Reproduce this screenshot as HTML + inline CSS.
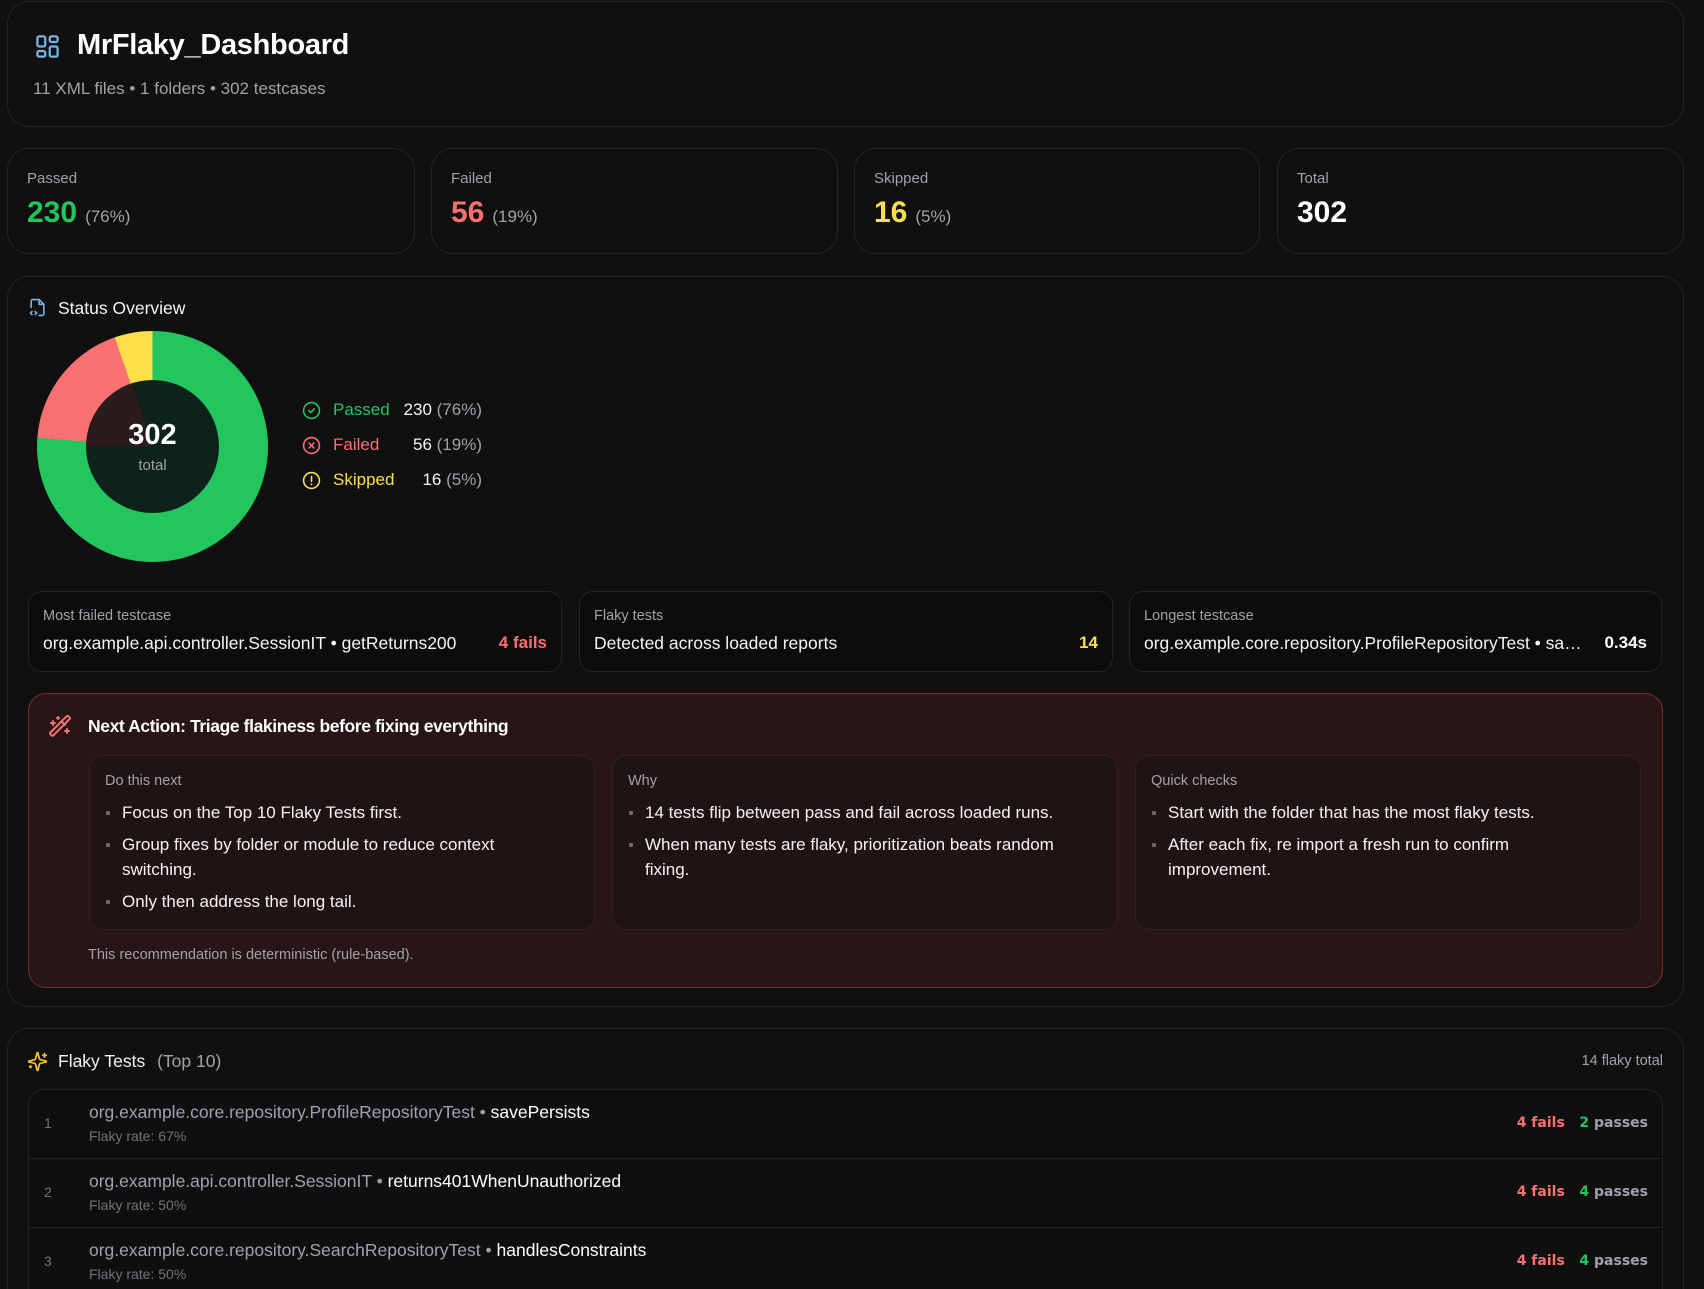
<!DOCTYPE html>
<html><head><meta charset="utf-8">
<style>
*{box-sizing:border-box;margin:0;padding:0}
html,body{width:1704px;height:1289px;overflow:hidden;background:#111112}
body{font-family:"Liberation Sans",Arial,sans-serif;color:#e5e7eb}
#w{position:relative;width:1704px;height:1289px;overflow:hidden}
.card{position:absolute;background:#101011;border:1px solid #26262a;border-radius:22px}
.abs{position:absolute;white-space:nowrap}
.lbl{color:#a1a1aa;font-size:15px}
.num{font-size:30px;font-weight:bold}
.pct{font-size:17px;color:#a1a1aa;margin-left:8px}
.mini{position:absolute;top:591px;height:81px;background:#0c0c0d;border:1px solid #242426;border-radius:14px}
.mini .l{position:absolute;left:14px;top:16px;font-size:14.5px;color:#a1a1aa}
.mini .v{position:absolute;left:14px;top:41px;font-size:17.5px;color:#f4f4f5;white-space:nowrap}
.mini .r{position:absolute;right:14px;top:41px;font-size:17px;font-weight:bold}
.ic{position:absolute;background:#201314;border:1px solid #31201f;border-radius:14px;top:755px;height:175px;width:506px}
.ic .h{position:absolute;left:15px;top:17px;font-size:14.5px;color:#a1a1aa}
.ic ul{position:absolute;left:15px;top:44px;right:30px;list-style:none}
.ic li{font-size:17px;line-height:25px;color:#f4f4f5;padding-left:17px;position:relative;margin-bottom:7px}
.ic li:before{content:"";position:absolute;left:1px;top:11px;width:4px;height:4px;background:#6b6b70;border-radius:1px}
.row{position:absolute;left:0;right:0;height:69px;border-top:1px solid #242426}
.row .i{position:absolute;left:15px;top:25px;font-size:14px;color:#71717a}
.row .n{position:absolute;left:60px;top:12px;font-size:17.5px;color:#9ca3af;white-space:nowrap}
.row .n b{color:#fff;font-weight:normal}
.row .f{position:absolute;left:60px;top:38px;font-size:14px;color:#71717a}
.row .s{position:absolute;right:14px;top:25px;font-family:"DejaVu Sans",sans-serif;font-weight:bold;font-size:14px;color:#9ca3af;white-space:nowrap}
</style></head><body><div id="w">

<div class="card" style="left:7px;top:1px;width:1677px;height:126px"></div>
<svg class="abs" style="left:34px;top:33px" width="27" height="27" viewBox="0 0 24 24" fill="none" stroke="#7ab4e0" stroke-width="2" stroke-linejoin="round"><rect x="3" y="3" width="7" height="9" rx="1.5"/><rect x="14" y="3" width="7" height="5" rx="1.5"/><rect x="14" y="12" width="7" height="9" rx="1.5"/><rect x="3" y="16" width="7" height="5" rx="1.5"/></svg>
<div class="abs" style="left:77px;top:29px;font-size:29px;font-weight:bold;color:#fff;letter-spacing:-0.3px">MrFlaky_Dashboard</div>
<div class="abs" style="left:33px;top:79px;font-size:17px;color:#a1a1aa">11 XML files • 1 folders • 302 testcases</div>

<div class="card" style="left:7px;top:148px;width:408px;height:106px"></div>
<div class="card" style="left:431px;top:148px;width:407px;height:106px"></div>
<div class="card" style="left:854px;top:148px;width:406px;height:106px"></div>
<div class="card" style="left:1277px;top:148px;width:407px;height:106px"></div>
<div class="abs lbl" style="left:27px;top:170px">Passed</div>
<div class="abs" style="left:27px;top:196px"><span class="num" style="color:#22c55e">230</span><span class="pct">(76%)</span></div>
<div class="abs lbl" style="left:451px;top:170px">Failed</div>
<div class="abs" style="left:451px;top:196px"><span class="num" style="color:#f87171">56</span><span class="pct">(19%)</span></div>
<div class="abs lbl" style="left:874px;top:170px">Skipped</div>
<div class="abs" style="left:874px;top:196px"><span class="num" style="color:#fde047">16</span><span class="pct">(5%)</span></div>
<div class="abs lbl" style="left:1297px;top:170px">Total</div>
<div class="abs" style="left:1297px;top:196px"><span class="num" style="color:#fff">302</span></div>

<div class="card" style="left:7px;top:276px;width:1677px;height:731px"></div>
<svg class="abs" style="left:28px;top:298px" width="19" height="19" viewBox="0 0 24 24" fill="none" stroke="#7ab4e0" stroke-width="2" stroke-linecap="round" stroke-linejoin="round"><path d="M4 12V4a2 2 0 0 1 2-2h8l6 6v12a2 2 0 0 1-2 2h-4"/><path d="M14 2v6h6"/><path d="m5 17-2 2 2 2"/><path d="m9 17 2 2-2 2"/></svg>
<div class="abs" style="left:58px;top:298px;font-size:17.5px;color:#f4f4f5">Status Overview</div>

<div class="abs" style="left:37px;top:331px;width:231px;height:231px;border-radius:50%;background:conic-gradient(#22c55e 0 76.2%,#f87171 0 94.7%,#fde047 0)"></div>
<div class="abs" style="left:86px;top:380px;width:133px;height:133px;border-radius:50%;background:conic-gradient(#0e211a 0 75%,#2a1b1c 75% 95%,#0f2219 95%)"></div>
<div class="abs" style="left:86px;top:419px;width:133px;text-align:center;font-size:29px;font-weight:bold;color:#fff">302</div>
<div class="abs" style="left:86px;top:457px;width:133px;text-align:center;font-size:15px;color:#a1a1aa">total</div>

<svg class="abs" style="left:302px;top:401px" width="19" height="19" viewBox="0 0 24 24" fill="none" stroke="#22c55e" stroke-width="2" stroke-linecap="round"><circle cx="12" cy="12" r="10"/><path d="m8.5 12 2.5 2.5 4.5-4.5"/></svg>
<div class="abs" style="left:333px;top:400px;font-size:17px;color:#22c55e">Passed</div>
<div class="abs" style="left:380px;top:400px;width:102px;text-align:right;font-size:17px;color:#f4f4f5">230 <span style="color:#a1a1aa">(76%)</span></div>
<svg class="abs" style="left:302px;top:436px" width="19" height="19" viewBox="0 0 24 24" fill="none" stroke="#f87171" stroke-width="2" stroke-linecap="round"><circle cx="12" cy="12" r="10"/><path d="m9 9 6 6M15 9l-6 6"/></svg>
<div class="abs" style="left:333px;top:435px;font-size:17px;color:#f87171">Failed</div>
<div class="abs" style="left:380px;top:435px;width:102px;text-align:right;font-size:17px;color:#f4f4f5">56 <span style="color:#a1a1aa">(19%)</span></div>
<svg class="abs" style="left:302px;top:471px" width="19" height="19" viewBox="0 0 24 24" fill="none" stroke="#fde047" stroke-width="2" stroke-linecap="round"><circle cx="12" cy="12" r="10"/><path d="M12 7v6M12 16.5v.5"/></svg>
<div class="abs" style="left:333px;top:470px;font-size:17px;color:#fde047">Skipped</div>
<div class="abs" style="left:380px;top:470px;width:102px;text-align:right;font-size:17px;color:#f4f4f5">16 <span style="color:#a1a1aa">(5%)</span></div>

<div class="mini" style="left:28px;width:534px"><div class="l">Most failed testcase</div><div class="v">org.example.api.controller.SessionIT • getReturns200</div><div class="r" style="color:#f87171">4 fails</div></div>
<div class="mini" style="left:579px;width:534px"><div class="l">Flaky tests</div><div class="v">Detected across loaded reports</div><div class="r" style="color:#fde047">14</div></div>
<div class="mini" style="left:1129px;width:533px"><div class="l">Longest testcase</div><div class="v">org.example.core.repository.ProfileRepositoryTest • sa…</div><div class="r" style="color:#fff">0.34s</div></div>

<div class="abs" style="left:28px;top:693px;width:1635px;height:295px;background:#281516;border:1px solid #7a2c2c;border-radius:18px"></div>
<svg class="abs" style="left:48px;top:715px" width="24" height="24" viewBox="0 0 24 24" fill="none" stroke="#f87171" stroke-width="2" stroke-linecap="round" stroke-linejoin="round"><path d="m21.6 2.4-1.2-1.2a1.2 1.2 0 0 0-1.7 0L2.4 17.5a1.2 1.2 0 0 0 0 1.7l1.2 1.2a1.2 1.2 0 0 0 1.7 0L21.6 4.1a1.2 1.2 0 0 0 0-1.7Z"/><path d="m14 7 3 3"/><path d="M5 6v4M19 14v4M10 2v2M7 8H3M21 16h-4M11 3H9"/></svg>
<div class="abs" style="left:88px;top:716px;font-size:17.5px;font-weight:bold;color:#fff;letter-spacing:-0.4px">Next Action: Triage flakiness before fixing everything</div>

<div class="ic" style="left:89px"><div class="h">Do this next</div><ul><li>Focus on the Top 10 Flaky Tests first.</li><li>Group fixes by folder or module to reduce context switching.</li><li>Only then address the long tail.</li></ul></div>
<div class="ic" style="left:612px"><div class="h">Why</div><ul><li>14 tests flip between pass and fail across loaded runs.</li><li>When many tests are flaky, prioritization beats random fixing.</li></ul></div>
<div class="ic" style="left:1135px"><div class="h">Quick checks</div><ul><li>Start with the folder that has the most flaky tests.</li><li>After each fix, re import a fresh run to confirm improvement.</li></ul></div>
<div class="abs" style="left:88px;top:947px;font-size:14.5px;color:#a1a1aa">This recommendation is deterministic (rule-based).</div>

<div class="card" style="left:7px;top:1028px;width:1677px;height:300px"></div>
<svg class="abs" style="left:27px;top:1051px" width="21" height="21" viewBox="0 0 24 24" fill="none" stroke="#fbbf24" stroke-width="2" stroke-linecap="round" stroke-linejoin="round"><path d="M9.9 15.5A2 2 0 0 0 8.5 14.1l-6.1-1.6a.5.5 0 0 1 0-1l6.1-1.6A2 2 0 0 0 9.9 8.5l1.6-6.1a.5.5 0 0 1 1 0l1.6 6.1a2 2 0 0 0 1.4 1.4l6.1 1.6a.5.5 0 0 1 0 1l-6.1 1.6a2 2 0 0 0-1.4 1.4l-1.6 6.1a.5.5 0 0 1-1 0z"/><path d="M20 3v4M22 5h-4M4 17v2M5 18H3"/></svg>
<div class="abs" style="left:58px;top:1051px;font-size:17.5px;color:#f4f4f5">Flaky Tests <span style="color:#a1a1aa;margin-left:7px">(Top 10)</span></div>
<div class="abs" style="right:41px;top:1053px;font-size:14.5px;color:#a1a1aa">14 flaky total</div>

<div class="abs" style="left:28px;top:1089px;width:1635px;height:240px;border:1px solid #242426;border-radius:16px;background:#0f0f10;overflow:hidden">
<div class="row" style="top:0;border-top:none"><div class="i">1</div><div class="n">org.example.core.repository.ProfileRepositoryTest • <b>savePersists</b></div><div class="f">Flaky rate: 67%</div><div class="s"><span style="color:#f87171">4 fails</span>&nbsp;&nbsp; <span style="color:#22c55e">2</span> passes</div></div>
<div class="row" style="top:68px"><div class="i">2</div><div class="n">org.example.api.controller.SessionIT • <b>returns401WhenUnauthorized</b></div><div class="f">Flaky rate: 50%</div><div class="s"><span style="color:#f87171">4 fails</span>&nbsp;&nbsp; <span style="color:#22c55e">4</span> passes</div></div>
<div class="row" style="top:137px"><div class="i">3</div><div class="n">org.example.core.repository.SearchRepositoryTest • <b>handlesConstraints</b></div><div class="f">Flaky rate: 50%</div><div class="s"><span style="color:#f87171">4 fails</span>&nbsp;&nbsp; <span style="color:#22c55e">4</span> passes</div></div>
</div>
</div></body></html>
